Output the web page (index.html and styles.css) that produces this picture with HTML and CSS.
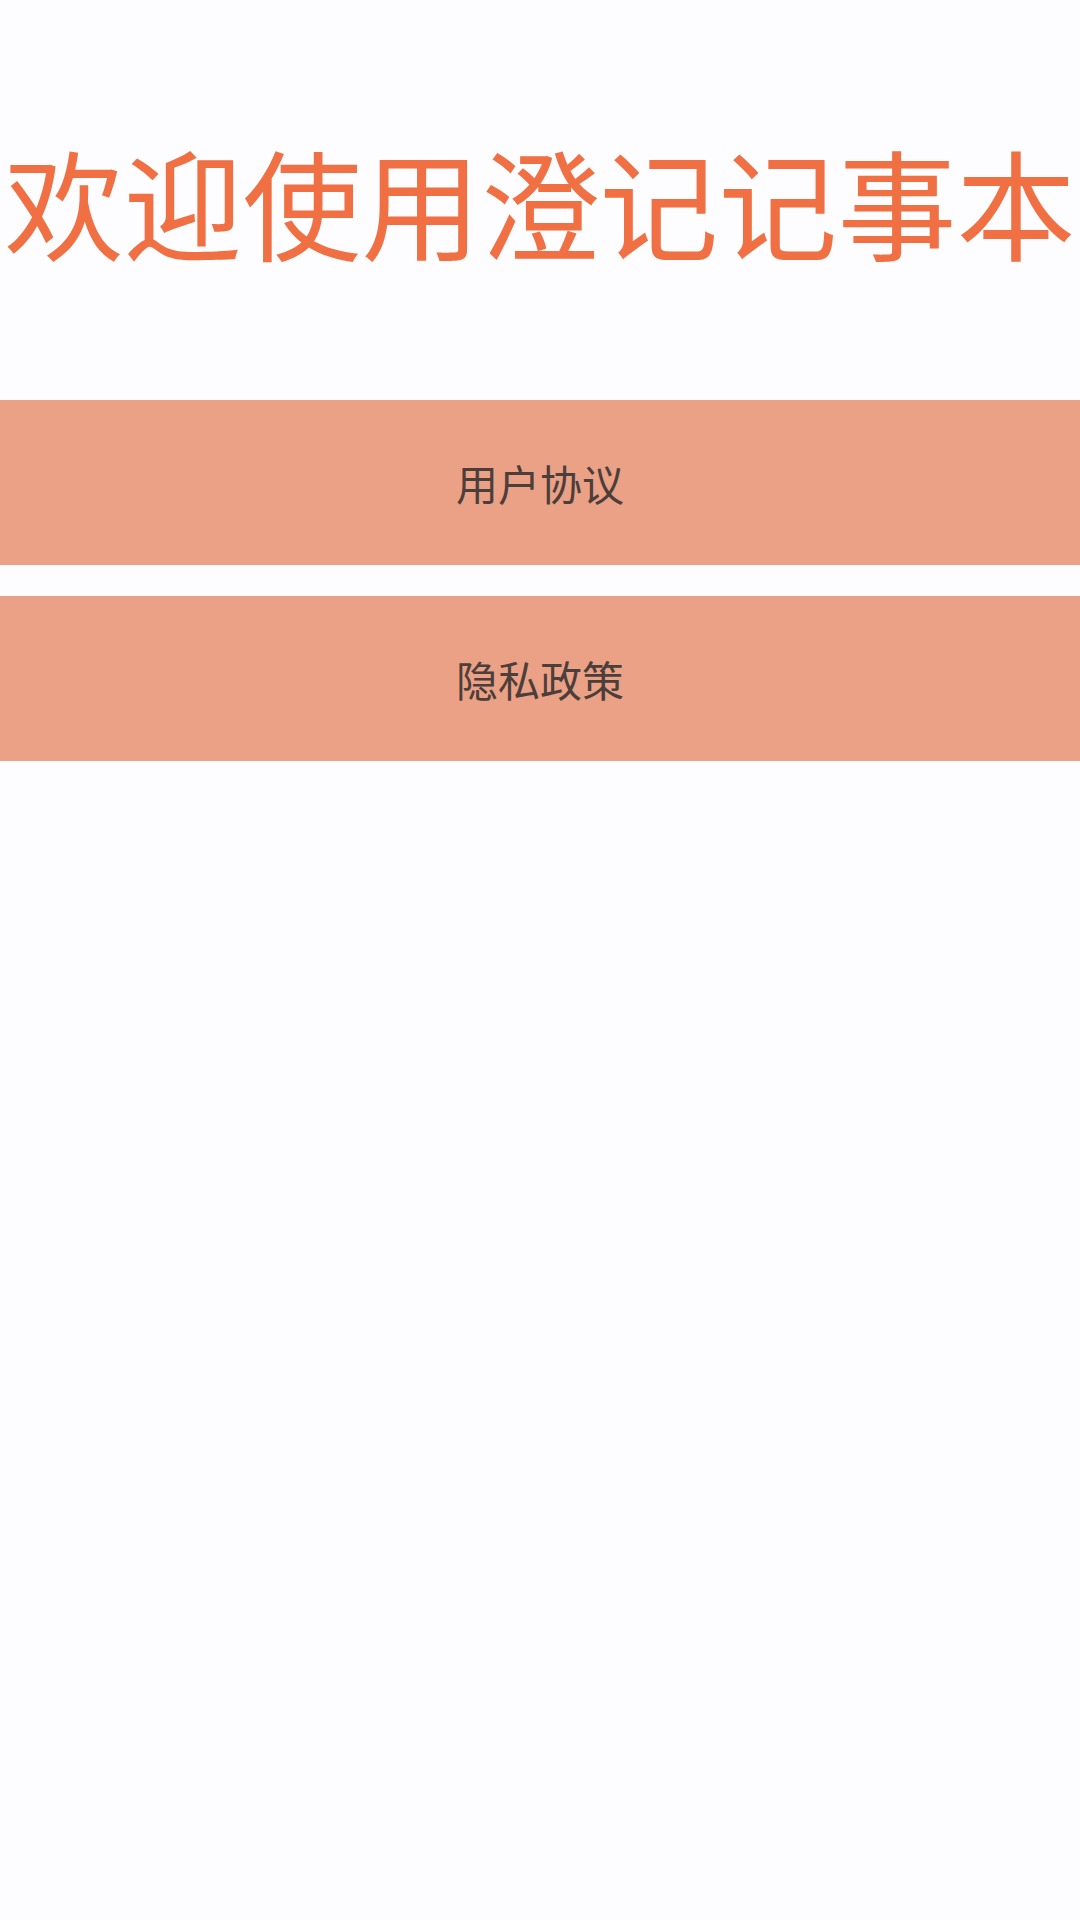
FILE: index.html
```html
<!DOCTYPE html>
<html lang="zh-CN">

<head>
    <meta charset="UTF-8">
    <meta name="viewport" content="width=device-width, initial-scale=1.0">
    <title>澄记记事本</title>
    <link rel="stylesheet" href="styles.css">
</head>

<body>
    <h1 class="welcome">欢迎使用澄记记事本</h1>
    <div class="links">
        <a href="javascript:" class="link-btn">用户协议</a>
        <a href="javascript:" class="link-btn">隐私政策</a>
    </div>
</body>

</html>
```

FILE: styles.css
```css
* {
    margin: 0;
    padding: 0;
    list-style: none;
    text-decoration: none;
}

body {
    background: #fdfcfe;
    font-family: "Noto Sans CJK SC", "Noto Sans", sans-serif;
    width: 1080px;
    height: 1920px;
}

.welcome {
    padding-top: 141px;
    height: 119px;
    line-height: 119px;
    margin-bottom: 140px;
    font-size: 119px;
    font-weight: 400;
    color: #f07043;
    text-align: center;
    white-space: nowrap;
}

.links {
    display: flex;
    flex-direction: column;
    gap: 31px;
}

.link-btn {
    display: flex;
    align-items: center;
    justify-content: center;
    height: 165px;
    background: #eaa185;
    color: #4b3e3b;
    font-size: 42px;
}
```
